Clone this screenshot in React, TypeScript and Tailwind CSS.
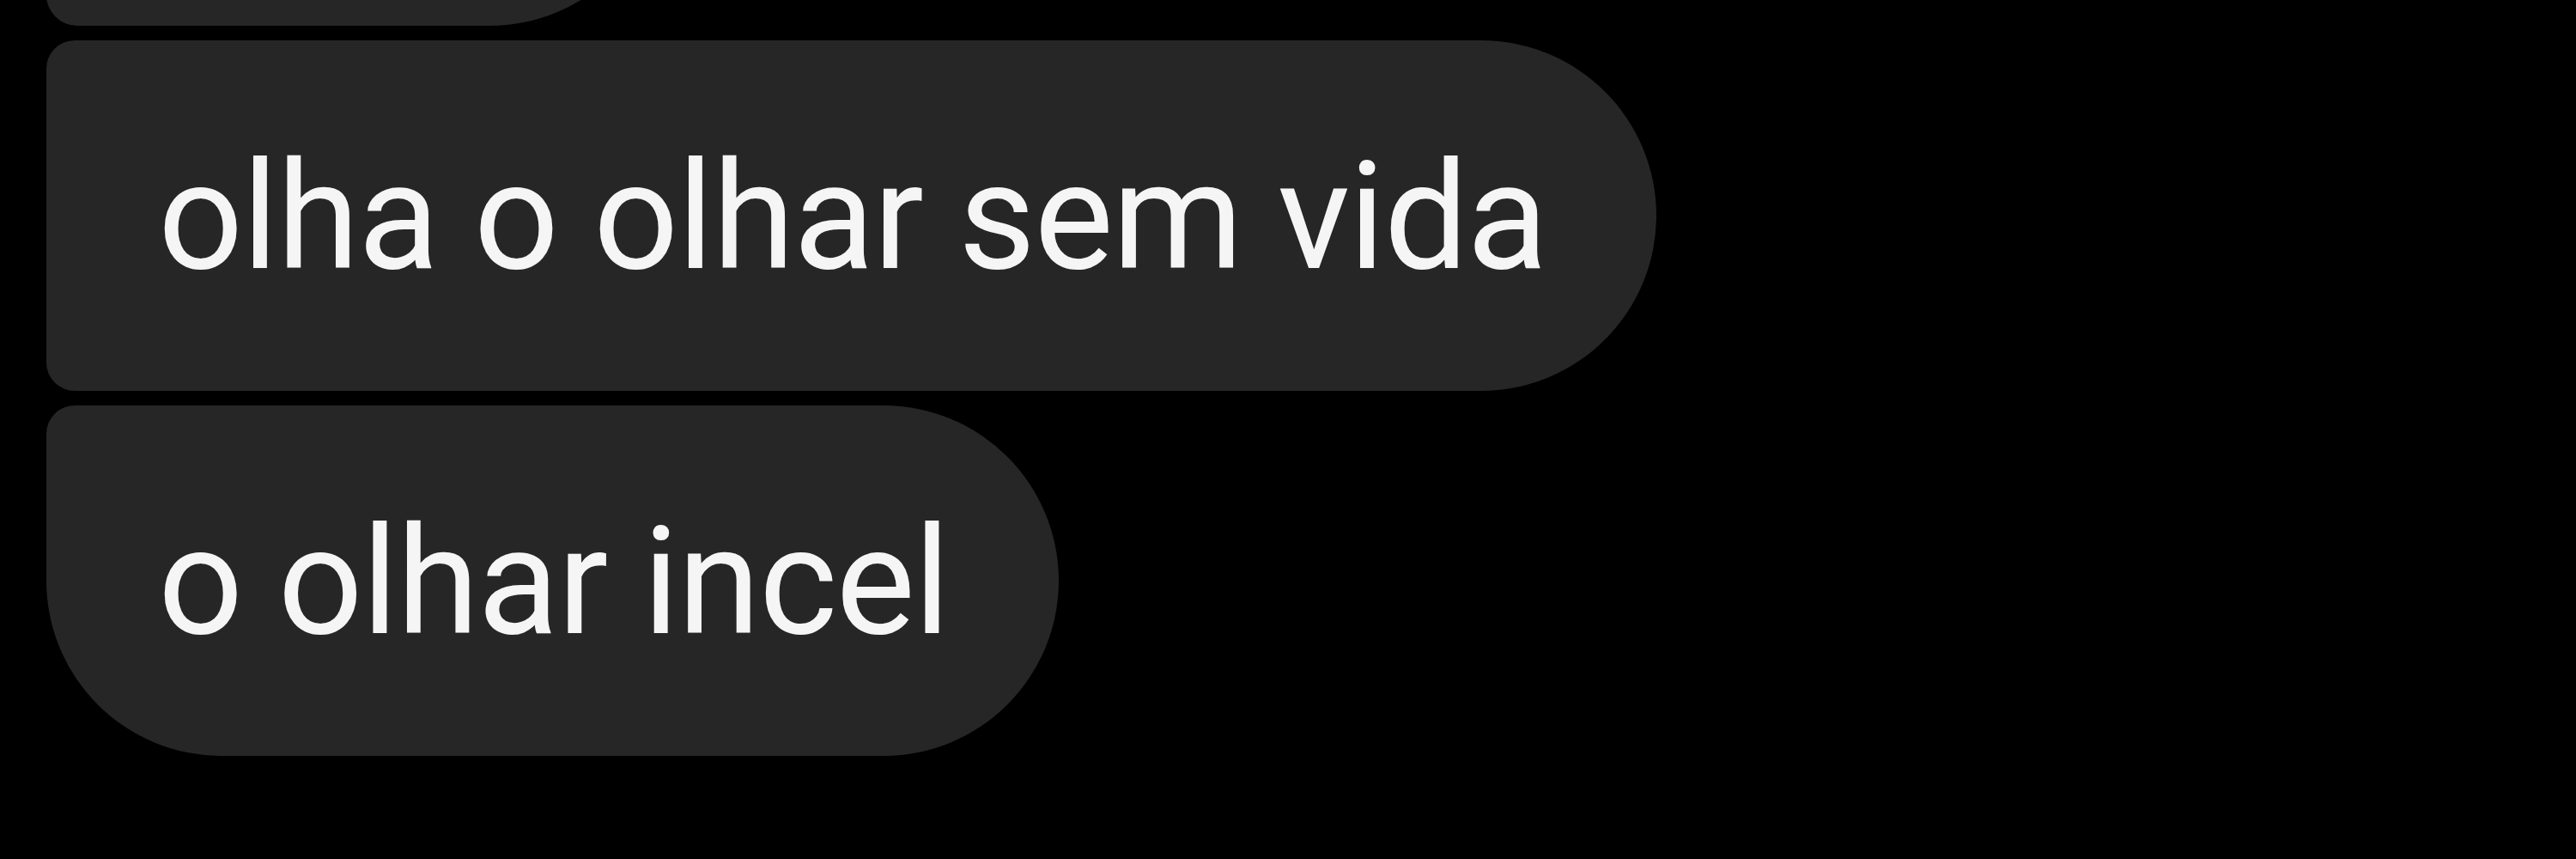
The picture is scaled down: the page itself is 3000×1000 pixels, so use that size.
import React from "react";

const Bubble = ({ text, corners }: { text: string; corners: string }) => {
  return (
    <div
      className={`self-start bg-[#262626] text-[#f5f5f5] text-[174px] tracking-[-1.5px] leading-[200px] pl-[130px] pr-[128px] pt-[106px] pb-[102px] whitespace-nowrap ${corners}`}
    >
      {text}
    </div>
  );
};

const App = () => {
  return (
    <div className="w-[3000px] h-[1000px] bg-black overflow-hidden font-['Roboto','Liberation_Sans',sans-serif]">
      <div className="flex flex-col gap-[17px] pl-[54px] -mt-[378px]">
        <div className="self-start w-[720px] h-[408px] bg-[#262626] rounded-tl-[33px] rounded-bl-[36px] rounded-r-[204px]" />
        <Bubble
          text="olha o olhar sem vida"
          corners="rounded-tl-[33px] rounded-bl-[33px] rounded-r-[204px]"
        />
        <Bubble
          text="o olhar incel"
          corners="rounded-tl-[33px] rounded-bl-[204px] rounded-r-[204px]"
        />
      </div>
    </div>
  );
};

export default App;
